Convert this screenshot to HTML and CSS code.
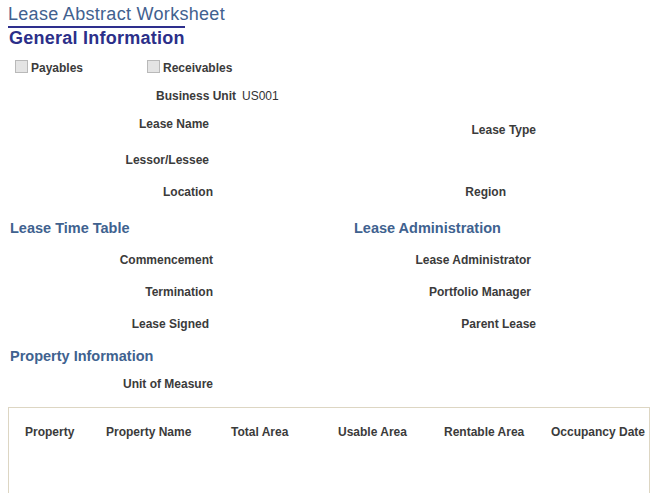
FILE: index.html
```html
<!DOCTYPE html>
<html lang="en">
<head>
<meta charset="utf-8">
<title>Lease Abstract Worksheet</title>
<link rel="stylesheet" href="styles.css">
</head>
<body>
<div class="page">
  <header class="page-head">
    <h1 class="page-title">Lease Abstract Worksheet</h1>
    <div class="title-rule"></div>
    <h2 class="group-title">General Information</h2>
  </header>

  <div class="checks">
    <label class="check check-first"><span class="box"></span>Payables</label>
    <label class="check"><span class="box"></span>Receivables</label>
  </div>

  <section class="general">
    <div class="general-left">
      <div class="field"><span class="lbl lbl-bu">Business Unit</span><span class="val">US001</span></div>
      <div class="field"><span class="lbl lbl-short">Lease Name</span></div>
      <div class="field"><span class="lbl lbl-short">Lessor/Lessee</span></div>
      <div class="field"><span class="lbl">Location</span></div>
    </div>
    <div class="general-right">
      <div class="field"><span class="lbl-r">Lease Type</span></div>
      <div class="field"><span class="lbl-r lbl-region">Region</span></div>
    </div>
  </section>

  <section class="pair">
    <div class="pair-col">
      <h3 class="sec-title">Lease Time Table</h3>
      <div class="field"><span class="lbl">Commencement</span></div>
      <div class="field"><span class="lbl">Termination</span></div>
      <div class="field"><span class="lbl lbl-short">Lease Signed</span></div>
    </div>
    <div class="pair-col pair-right">
      <h3 class="sec-title">Lease Administration</h3>
      <div class="field"><span class="lbl-r lbl-r-mid">Lease Administrator</span></div>
      <div class="field"><span class="lbl-r lbl-r-mid">Portfolio Manager</span></div>
      <div class="field"><span class="lbl-r">Parent Lease</span></div>
    </div>
  </section>

  <section class="property">
    <h3 class="sec-title">Property Information</h3>
    <div class="field uom"><span class="lbl">Unit of Measure</span></div>
    <div class="grid-box">
      <div class="grid-head">
        <span>Property</span>
        <span>Property Name</span>
        <span>Total Area</span>
        <span>Usable Area</span>
        <span>Rentable Area</span>
        <span>Occupancy Date</span>
      </div>
    </div>
  </section>
</div>
</body>
</html>
```

FILE: styles.css
```css
* { box-sizing: border-box; }

html, body {
  margin: 0;
  padding: 0;
  background: #ffffff;
}

body {
  font-family: "Liberation Sans", Arial, sans-serif;
  color: #3b3b3b;
  overflow: hidden;
}

.page {
  width: 662px;
  height: 493px;
  overflow: hidden;
}

/* header */
.page-title {
  margin: 3px 0 0 8px;
  font-size: 18px;
  line-height: 22px;
  font-weight: normal;
  color: #42618f;
  letter-spacing: 0.3px;
}

.title-rule {
  margin: 1px 0 0 8px;
  width: 177px;
  height: 2px;
  background: #2e2f8d;
}

.group-title {
  margin: 0 0 0 9px;
  font-size: 18px;
  line-height: 20px;
  font-weight: bold;
  color: #2b2f89;
  letter-spacing: 0.25px;
}

/* checkboxes */
.checks {
  display: flex;
  margin-top: 13px;
  padding-left: 15px;
  height: 14px;
}

.check {
  display: flex;
  align-items: flex-start;
  font-size: 12px;
  line-height: 14px;
  font-weight: bold;
}

.check-first {
  width: 132px;
}

.box {
  display: block;
  width: 13px;
  height: 13px;
  margin-top: -1px;
  margin-right: 3px;
  background: #e4e4e4;
  border: 1px solid #b9b9b9;
}

/* fields */
.field {
  display: flex;
  font-size: 12px;
  line-height: 14px;
  height: 14px;
}

.lbl, .lbl-r {
  display: block;
  font-weight: bold;
  text-align: right;
  white-space: nowrap;
}

.lbl { width: 213px; }
.lbl-short { width: 209px; }
.lbl-bu { width: 236px; }

.lbl-r { width: 182px; }
.lbl-r-mid { width: 177px; }
.lbl-region { width: 152px; }

.val {
  margin-left: 6px;
  color: #333333;
}

.general {
  display: grid;
  grid-template-columns: 354px 1fr;
  padding-top: 14px;
}

.general-left {
  display: grid;
  grid-template-rows: 28px 36px 32px 14px;
}

.general-right {
  display: grid;
  grid-template-rows: 62px 14px;
  padding-top: 34px;
}

/* section headers */
.sec-title {
  margin: 0;
  font-size: 14.5px;
  line-height: 17px;
  font-weight: bold;
  color: #40628f;
}

.pair {
  display: grid;
  grid-template-columns: 354px 1fr;
  margin-top: 21px;
}

.pair-col {
  display: flex;
  flex-direction: column;
  gap: 18px;
}

.pair-col .sec-title {
  margin-bottom: -2px;
}

.pair-col:first-child .sec-title {
  padding-left: 10px;
}

.property {
  margin-top: 17px;
}

.property .sec-title {
  padding-left: 10px;
}

.uom {
  margin-top: 12px;
}

.grid-box {
  margin: 16px 0 0 8px;
  width: 642px;
  height: 86px;
  border: 1px solid #ddd6c3;
  border-bottom: none;
  padding: 17px 0 0 16px;
}

.grid-head {
  display: grid;
  grid-template-columns: 81px 125px 107px 106px 107px 1fr;
  font-size: 12px;
  line-height: 14px;
  font-weight: bold;
  white-space: nowrap;
}
```
